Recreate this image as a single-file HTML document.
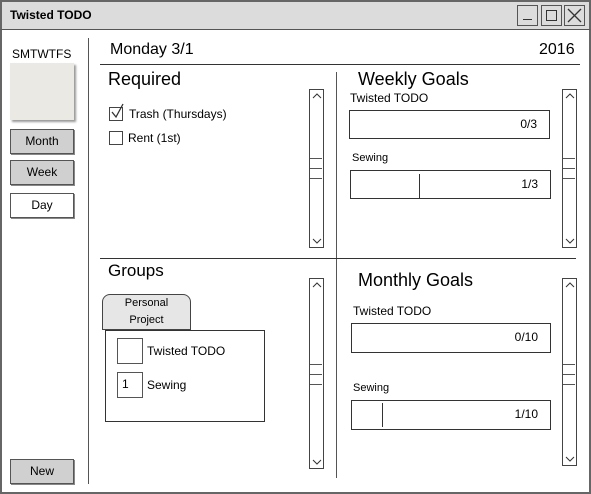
<!DOCTYPE html>
<html><head><style>
*{margin:0;padding:0;box-sizing:border-box}
body{width:591px;height:494px;position:relative;background:#fff;font-family:"Liberation Sans",sans-serif;color:#000;overflow:hidden}
.a{position:absolute}
.b{position:absolute;border:1.5px solid #333}
.t{position:absolute;white-space:nowrap}
.btn{position:absolute;border:1.5px solid #555;font-size:12px;text-align:center;line-height:22px;box-shadow:1px 1px 0 #888}
.sb{position:absolute;border:1.5px solid #444;width:15px;background:#fff}
.sb svg{position:absolute;left:2px}
.sb i{position:absolute;left:0;width:12px;border-top:1px solid #555}
.bar{position:absolute;border:1.5px solid #333;font-size:12px;text-align:right;padding-right:12px;line-height:27px}
.cb{position:absolute;border:1.5px solid #444;width:14px;height:14px}
</style></head><body>
<div class="a" style="left:0;top:0;width:591px;height:494px;border:2px solid #666"></div>
<div class="a" style="left:0;top:0;width:591px;height:30px;background:#dcdcdc;border:2px solid #666;border-bottom:1.5px solid #555"></div>
<div class="t" style="left:10px;top:8px;font-size:12px;font-weight:bold">Twisted TODO</div>
<div class="b" style="left:517px;top:5px;width:21px;height:21px;border-color:#555"><div class="a" style="left:5px;top:13px;width:9px;border-top:1.5px solid #333"></div></div>
<div class="b" style="left:541px;top:5px;width:21px;height:21px;border-color:#555"><div class="a" style="left:4px;top:4px;width:11px;height:11px;border:1.5px solid #333"></div></div>
<div class="b" style="left:564px;top:5px;width:21px;height:21px;border-color:#555"><svg class="a" style="left:2px;top:2px" width="15" height="15"><path d="M1 1L14 14M14 1L1 14" stroke="#333" stroke-width="1.3"/></svg></div>

<div class="a" style="left:88px;top:38px;height:446px;border-left:1.5px solid #555"></div>
<div class="t" style="left:12px;top:47px;font-size:12px">SMTWTFS</div>
<div class="a" style="left:10px;top:63px;width:64px;height:57px;background:#ebe9e4;box-shadow:2px 2px 2px #999"></div>
<div class="btn" style="left:10px;top:129px;width:64px;height:25px;background:#d0d0d0">Month</div>
<div class="btn" style="left:10px;top:160px;width:64px;height:25px;background:#d0d0d0">Week</div>
<div class="btn" style="left:10px;top:193px;width:64px;height:25px;background:#fff">Day</div>
<div class="btn" style="left:10px;top:459px;width:64px;height:25px;background:#d0d0d0">New</div>

<div class="t" style="left:110px;top:41px;font-size:16px">Monday 3/1</div>
<div class="t" style="left:539px;top:41px;font-size:16px">2016</div>
<div class="a" style="left:100px;top:64px;width:480px;border-top:1.5px solid #333"></div>
<div class="a" style="left:336px;top:72px;height:406px;border-left:1.5px solid #555"></div>
<div class="a" style="left:100px;top:258px;width:476px;border-top:1.5px solid #333"></div>

<div class="t" style="left:108px;top:69px;font-size:18px">Required</div>
<div class="cb" style="left:109px;top:107px"></div>
<svg class="a" style="left:110px;top:103px" width="16" height="16"><path d="M2 9L6 14L13 1" stroke="#333" stroke-width="1.3" fill="none"/></svg>
<div class="t" style="left:129px;top:107px;font-size:12px">Trash (Thursdays)</div>
<div class="cb" style="left:109px;top:131px"></div>
<div class="t" style="left:128px;top:131px;font-size:12px">Rent (1st)</div>
<div class="sb" style="left:309px;top:89px;height:159px"><svg style="top:3px" width="10" height="6"><path d="M1 5L5 1L9 5" stroke="#333" fill="none"/></svg><svg style="bottom:3px" width="10" height="6"><path d="M1 1L5 5L9 1" stroke="#333" fill="none"/></svg><i style="top:68px"></i><i style="top:78px"></i><i style="top:88px"></i></div>

<div class="t" style="left:358px;top:69px;font-size:18px">Weekly Goals</div>
<div class="t" style="left:350px;top:91px;font-size:12px">Twisted TODO</div>
<div class="bar" style="left:349px;top:110px;width:201px;height:29px">0/3</div>
<div class="t" style="left:352px;top:152px;font-size:11px">Sewing</div>
<div class="bar" style="left:350px;top:170px;width:201px;height:29px">1/3</div>
<div class="a" style="left:419px;top:174px;height:24px;border-left:1.5px solid #333"></div>
<div class="sb" style="left:562px;top:89px;height:159px"><svg style="top:3px" width="10" height="6"><path d="M1 5L5 1L9 5" stroke="#333" fill="none"/></svg><svg style="bottom:3px" width="10" height="6"><path d="M1 1L5 5L9 1" stroke="#333" fill="none"/></svg><i style="top:68px"></i><i style="top:78px"></i><i style="top:88px"></i></div>

<div class="t" style="left:108px;top:261px;font-size:17px">Groups</div>
<div class="a" style="left:102px;top:294px;width:89px;height:36px;background:#e6e6e6;border:1.5px solid #444;border-radius:8px 8px 0 0;font-size:11px;text-align:center;line-height:17px">Personal<br>Project</div>
<div class="b" style="left:105px;top:330px;width:160px;height:92px;background:#fff"></div>
<div class="b" style="left:117px;top:338px;width:26px;height:26px;border-color:#555"></div>
<div class="t" style="left:147px;top:344px;font-size:12px">Twisted TODO</div>
<div class="b" style="left:117px;top:372px;width:26px;height:26px;border-color:#555;font-size:12px;padding:4px 0 0 4px">1</div>
<div class="t" style="left:147px;top:378px;font-size:12px">Sewing</div>
<div class="sb" style="left:309px;top:278px;height:191px"><svg style="top:3px" width="10" height="6"><path d="M1 5L5 1L9 5" stroke="#333" fill="none"/></svg><svg style="bottom:3px" width="10" height="6"><path d="M1 1L5 5L9 1" stroke="#333" fill="none"/></svg><i style="top:85px"></i><i style="top:95px"></i><i style="top:105px"></i></div>

<div class="t" style="left:358px;top:270px;font-size:18px">Monthly Goals</div>
<div class="t" style="left:353px;top:304px;font-size:12px">Twisted TODO</div>
<div class="bar" style="left:351px;top:323px;width:200px;height:30px">0/10</div>
<div class="t" style="left:353px;top:382px;font-size:11px">Sewing</div>
<div class="bar" style="left:351px;top:400px;width:200px;height:30px">1/10</div>
<div class="a" style="left:382px;top:403px;height:24px;border-left:1.5px solid #333"></div>
<div class="sb" style="left:562px;top:278px;height:188px"><svg style="top:3px" width="10" height="6"><path d="M1 5L5 1L9 5" stroke="#333" fill="none"/></svg><svg style="bottom:3px" width="10" height="6"><path d="M1 1L5 5L9 1" stroke="#333" fill="none"/></svg><i style="top:85px"></i><i style="top:95px"></i><i style="top:105px"></i></div>
</body></html>
